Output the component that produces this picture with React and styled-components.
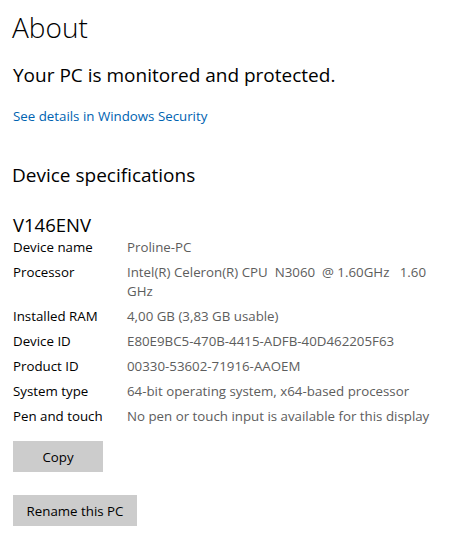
import React from "react";
import styled, { createGlobalStyle } from "styled-components";

const specs = [
  { label: "Device name", value: "Proline-PC" },
  { label: "Processor", value: "Intel(R) Celeron(R) CPU  N3060  @ 1.60GHz   1.60 GHz" },
  { label: "Installed RAM", value: "4,00 GB (3,83 GB usable)" },
  { label: "Device ID", value: "E80E9BC5-470B-4415-ADFB-40D462205F63" },
  { label: "Product ID", value: "00330-53602-71916-AAOEM" },
  { label: "System type", value: "64-bit operating system, x64-based processor" },
  { label: "Pen and touch", value: "No pen or touch input is available for this display" },
];

const App = () => {
  return (
    <Page>
      <GlobalStyle />
      <Title>About</Title>
      <Status>Your PC is monitored and protected.</Status>
      <Link href="#">See details in Windows Security</Link>
      <Section>Device specifications</Section>
      <Model>V146ENV</Model>
      <SpecList>
        {specs.map((s) => (
          <SpecRow key={s.label}>
            <Label>{s.label}</Label>
            <Value>{s.value}</Value>
          </SpecRow>
        ))}
      </SpecList>
      <Button $gap="15px">Copy</Button>
      <Button $gap="23px" $wide>
        Rename this PC
      </Button>
    </Page>
  );
};

export default App;

//style
const GlobalStyle = createGlobalStyle`
  body {
    margin: 0;
    background: #ffffff;
    font-family: "Open Sans", "Noto Sans", sans-serif;
    color: #000000;
  }
`;

const Page = styled.div`
  width: 452px;
  height: 536px;
  padding: 9px 0 0 13px;
  box-sizing: border-box;
  display: flex;
  flex-direction: column;
  align-items: flex-start;
`;

const Title = styled.h1`
  margin: 0 0 0 -1px;
  font-size: 28px;
  font-weight: 300;
  line-height: 36px;
`;

const Status = styled.div`
  margin-top: 17px;
  font-size: 19px;
  line-height: 26px;
`;

const Link = styled.a`
  margin-top: 18px;
  font-size: 13.3px;
  line-height: 20px;
  color: #0063b1;
  text-decoration: none;
`;

const Section = styled.h2`
  margin: 36px 0 0 -1px;
  font-size: 19px;
  font-weight: 400;
  line-height: 26px;
`;

const Model = styled.div`
  margin-top: 25px;
  font-size: 18.5px;
  line-height: 24px;
`;

const SpecList = styled.div`
  display: flex;
  flex-direction: column;
  gap: 6px;
  margin-top: 1px;
`;

const SpecRow = styled.div`
  display: grid;
  grid-template-columns: 114px 308px;
  font-size: 13.3px;
  line-height: 19px;
`;

const Label = styled.span`
  color: #000000;
`;

const Value = styled.span`
  color: #5d5d5d;
  white-space: pre-wrap;
`;

const Button = styled.button`
  margin-top: ${(p) => p.$gap};
  width: ${(p) => (p.$wide ? "124px" : "90px")};
  height: 31px;
  border: none;
  background: #cccccc;
  font-family: inherit;
  font-size: 13.3px;
  color: #000000;
  padding: 0;
`;
